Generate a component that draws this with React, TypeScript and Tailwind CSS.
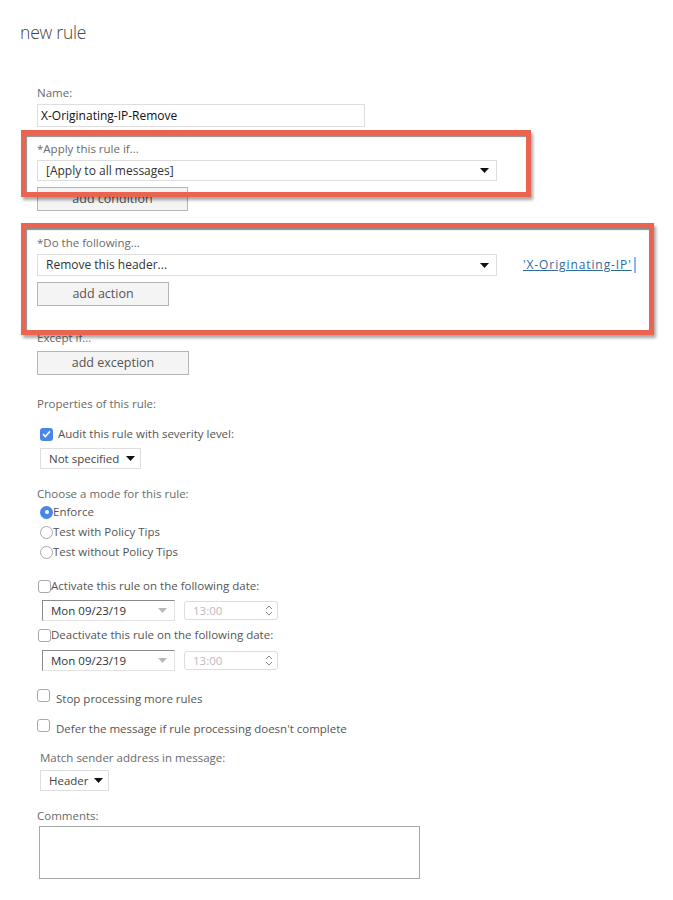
import React from 'react';

const font = { fontFamily: '"Open Sans", "Noto Sans", sans-serif' };

function Caret({ light }: { light?: boolean }) {
  return (
    <svg width="9" height="5" viewBox="0 0 9 5" className="shrink-0">
      <path d="M0 0 L9 0 L4.5 5 Z" fill={light ? '#b8b8b8' : '#111'} />
    </svg>
  );
}

function Label({ children, className = '' }: { children: React.ReactNode; className?: string }) {
  return <div className={`h-4 leading-4 text-[11.5px] text-[#6a6a6a] ${className}`}>{children}</div>;
}

function Select({ text, w, className = '' }: { text: string; w: string; className?: string }) {
  return (
    <div
      className={`h-[22px] ${w} flex items-center justify-between border border-[#dedede] bg-white pl-2 pr-[7px] text-[12px] text-[#333] ${className}`}
    >
      <span>{text}</span>
      <Caret />
    </div>
  );
}

function Btn({ text, w, className = '' }: { text: string; w: string; className?: string }) {
  return (
    <div
      className={`h-6 ${w} flex items-center justify-center border border-[#b5b5b5] bg-[#f4f4f4] text-[12.5px] text-[#555] ${className}`}
    >
      {text}
    </div>
  );
}

function Check({ checked }: { checked?: boolean }) {
  if (checked) {
    return (
      <div className="w-[13px] h-[13px] rounded-[3px] bg-[#4a86e8] flex items-center justify-center shrink-0">
        <svg width="9" height="8" viewBox="0 0 9 8">
          <path d="M1 4.2 L3.4 6.5 L8 1.2" stroke="#fff" strokeWidth="1.6" fill="none" />
        </svg>
      </div>
    );
  }
  return <div className="w-[13px] h-[13px] rounded-[3px] border border-[#a8a8a8] bg-white shrink-0" />;
}

function Radio({ on }: { on?: boolean }) {
  if (on) {
    return (
      <div className="w-[13px] h-[13px] rounded-full bg-[#4a86e8] flex items-center justify-center shrink-0">
        <div className="w-1 h-1 rounded-full bg-white" />
      </div>
    );
  }
  return <div className="w-[13px] h-[13px] rounded-full border border-[#a8a8a8] bg-white shrink-0" />;
}

function DateRow({ className = '' }: { className?: string }) {
  return (
    <div className={`flex items-center gap-[9px] h-[21px] ${className}`}>
      <div className="h-[21px] w-[133px] flex items-center justify-between border border-[#e2e2e2] border-l-[#8a8a8a] border-t-[#8a8a8a] pl-2 pr-[7px] text-[11.5px] text-[#333]">
        <span>Mon 09/23/19</span>
        <Caret light />
      </div>
      <div className="h-[19px] w-[94px] flex items-center justify-between rounded-[3px] border border-[#dcdcdc] pl-2 pr-[4px] text-[11.5px] text-[#bcbcbc]">
        <span>13:00</span>
        <svg width="8" height="11" viewBox="0 0 8 11">
          <path d="M1 4 L4 1 L7 4 M1 7 L4 10 L7 7" stroke="#888" strokeWidth="1" fill="none" />
        </svg>
      </div>
    </div>
  );
}

export default function App() {
  return (
    <div className="relative w-[673px] h-[900px] bg-white overflow-hidden" style={font}>
      <div className="pl-5 pt-5">
        <h1 className="h-6 leading-6 text-[17.5px] font-light text-[#444] tracking-[-0.2px]">new rule</h1>
      </div>

      <div className="pl-[37px]">
        <Label className="mt-[41px]">Name:</Label>
        <div className="mt-[3px] h-[23px] w-[328px] border border-[#dedede] flex items-center pl-[3px] text-[12px] text-[#111]">
          X-Originating-IP-Remove
        </div>

        <Label className="mt-[14px]">*Apply this rule if...</Label>
        <Select text="[Apply to all messages]" w="w-[460px]" className="mt-[3px] !h-[21px]" />
        <Btn text="add condition" w="w-[151px]" className="mt-[6px]" />

        <Label className="mt-6">*Do the following...</Label>
        <div className="mt-[3px] flex items-center h-[22px]">
          <Select text="Remove this header..." w="w-[460px]" />
          <a className="ml-[26px] text-[12px] text-[#2d6c9e] underline tracking-[0.9px]">'X-Originating-IP'</a>
          <div className="ml-[2px] w-[2px] h-[16px] bg-[#8fb4f0]" />
        </div>
        <Btn text="add action" w="w-[132px]" className="mt-[6px]" />

        <Label className="mt-6">Except if...</Label>
        <Btn text="add exception" w="w-[152px]" className="mt-[5px]" />

        <Label className="mt-[21px]">Properties of this rule:</Label>
        <div className="mt-[14px] h-4 flex items-center gap-[5px] pl-[3px] text-[11.5px] text-[#555]">
          <Check checked />
          <span>Audit this rule with severity level:</span>
        </div>
        <div className="mt-[6px] ml-[3px] h-[21px] w-[101px] flex items-center justify-between border border-[#dedede] pl-2 pr-[5px] text-[11.5px] text-[#444]">
          <span>Not specified</span>
          <Caret />
        </div>

        <Label className="mt-[17px]">Choose a mode for this rule:</Label>
        <div className="pl-[3px] text-[11.5px] text-[#555]">
          <div className="h-5 flex items-center">
            <Radio on />
            <span>Enforce</span>
          </div>
          <div className="h-5 flex items-center">
            <Radio />
            <span>Test with Policy Tips</span>
          </div>
          <div className="h-5 flex items-center">
            <Radio />
            <span>Test without Policy Tips</span>
          </div>
        </div>

        <div className="mt-4 h-4 flex items-center pl-[1px] text-[11.5px] text-[#555]">
          <Check />
          <span>Activate this rule on the following date:</span>
        </div>
        <DateRow className="mt-[6px] ml-[5px]" />
        <div className="mt-[6px] h-4 flex items-center pl-[1px] text-[11.5px] text-[#555]">
          <Check />
          <span>Deactivate this rule on the following date:</span>
        </div>
        <DateRow className="mt-[7px] ml-[5px]" />

        <div className="mt-[18px] h-4 flex items-start gap-[6px] text-[11.5px] text-[#555]">
          <Check />
          <span className="mt-[2px] leading-4">Stop processing more rules</span>
        </div>
        <div className="mt-[14px] h-4 flex items-start gap-[6px] text-[11.5px] text-[#555]">
          <Check />
          <span className="mt-[2px] leading-4">Defer the message if rule processing doesn't complete</span>
        </div>

        <Label className="mt-[15px] ml-[3px]">Match sender address in message:</Label>
        <div className="mt-1 ml-[3px] h-[21px] w-[69px] flex items-center justify-between border border-[#dedede] pl-2 pr-[5px] text-[11.5px] text-[#444]">
          <span>Header</span>
          <Caret />
        </div>

        <Label className="mt-[17px]">Comments:</Label>
        <div className="mt-[2px] ml-[2px] h-[53px] w-[381px] border border-[#a8a8a8]" />
      </div>

      {/* annotation boxes */}
      <div className="absolute left-[21px] top-[130px] w-[510px] h-[67px] border-[5px] border-[#ea6450] shadow-[inset_1px_2px_1px_rgba(0,0,0,0.45),2px_3px_3px_rgba(0,0,0,0.35)] pointer-events-none" />
      <div className="absolute left-[21px] top-[223px] w-[633px] h-[112px] border-[5px] border-[#ea6450] shadow-[inset_1px_2px_1px_rgba(0,0,0,0.45),2px_3px_3px_rgba(0,0,0,0.35)] pointer-events-none" />
    </div>
  );
}
